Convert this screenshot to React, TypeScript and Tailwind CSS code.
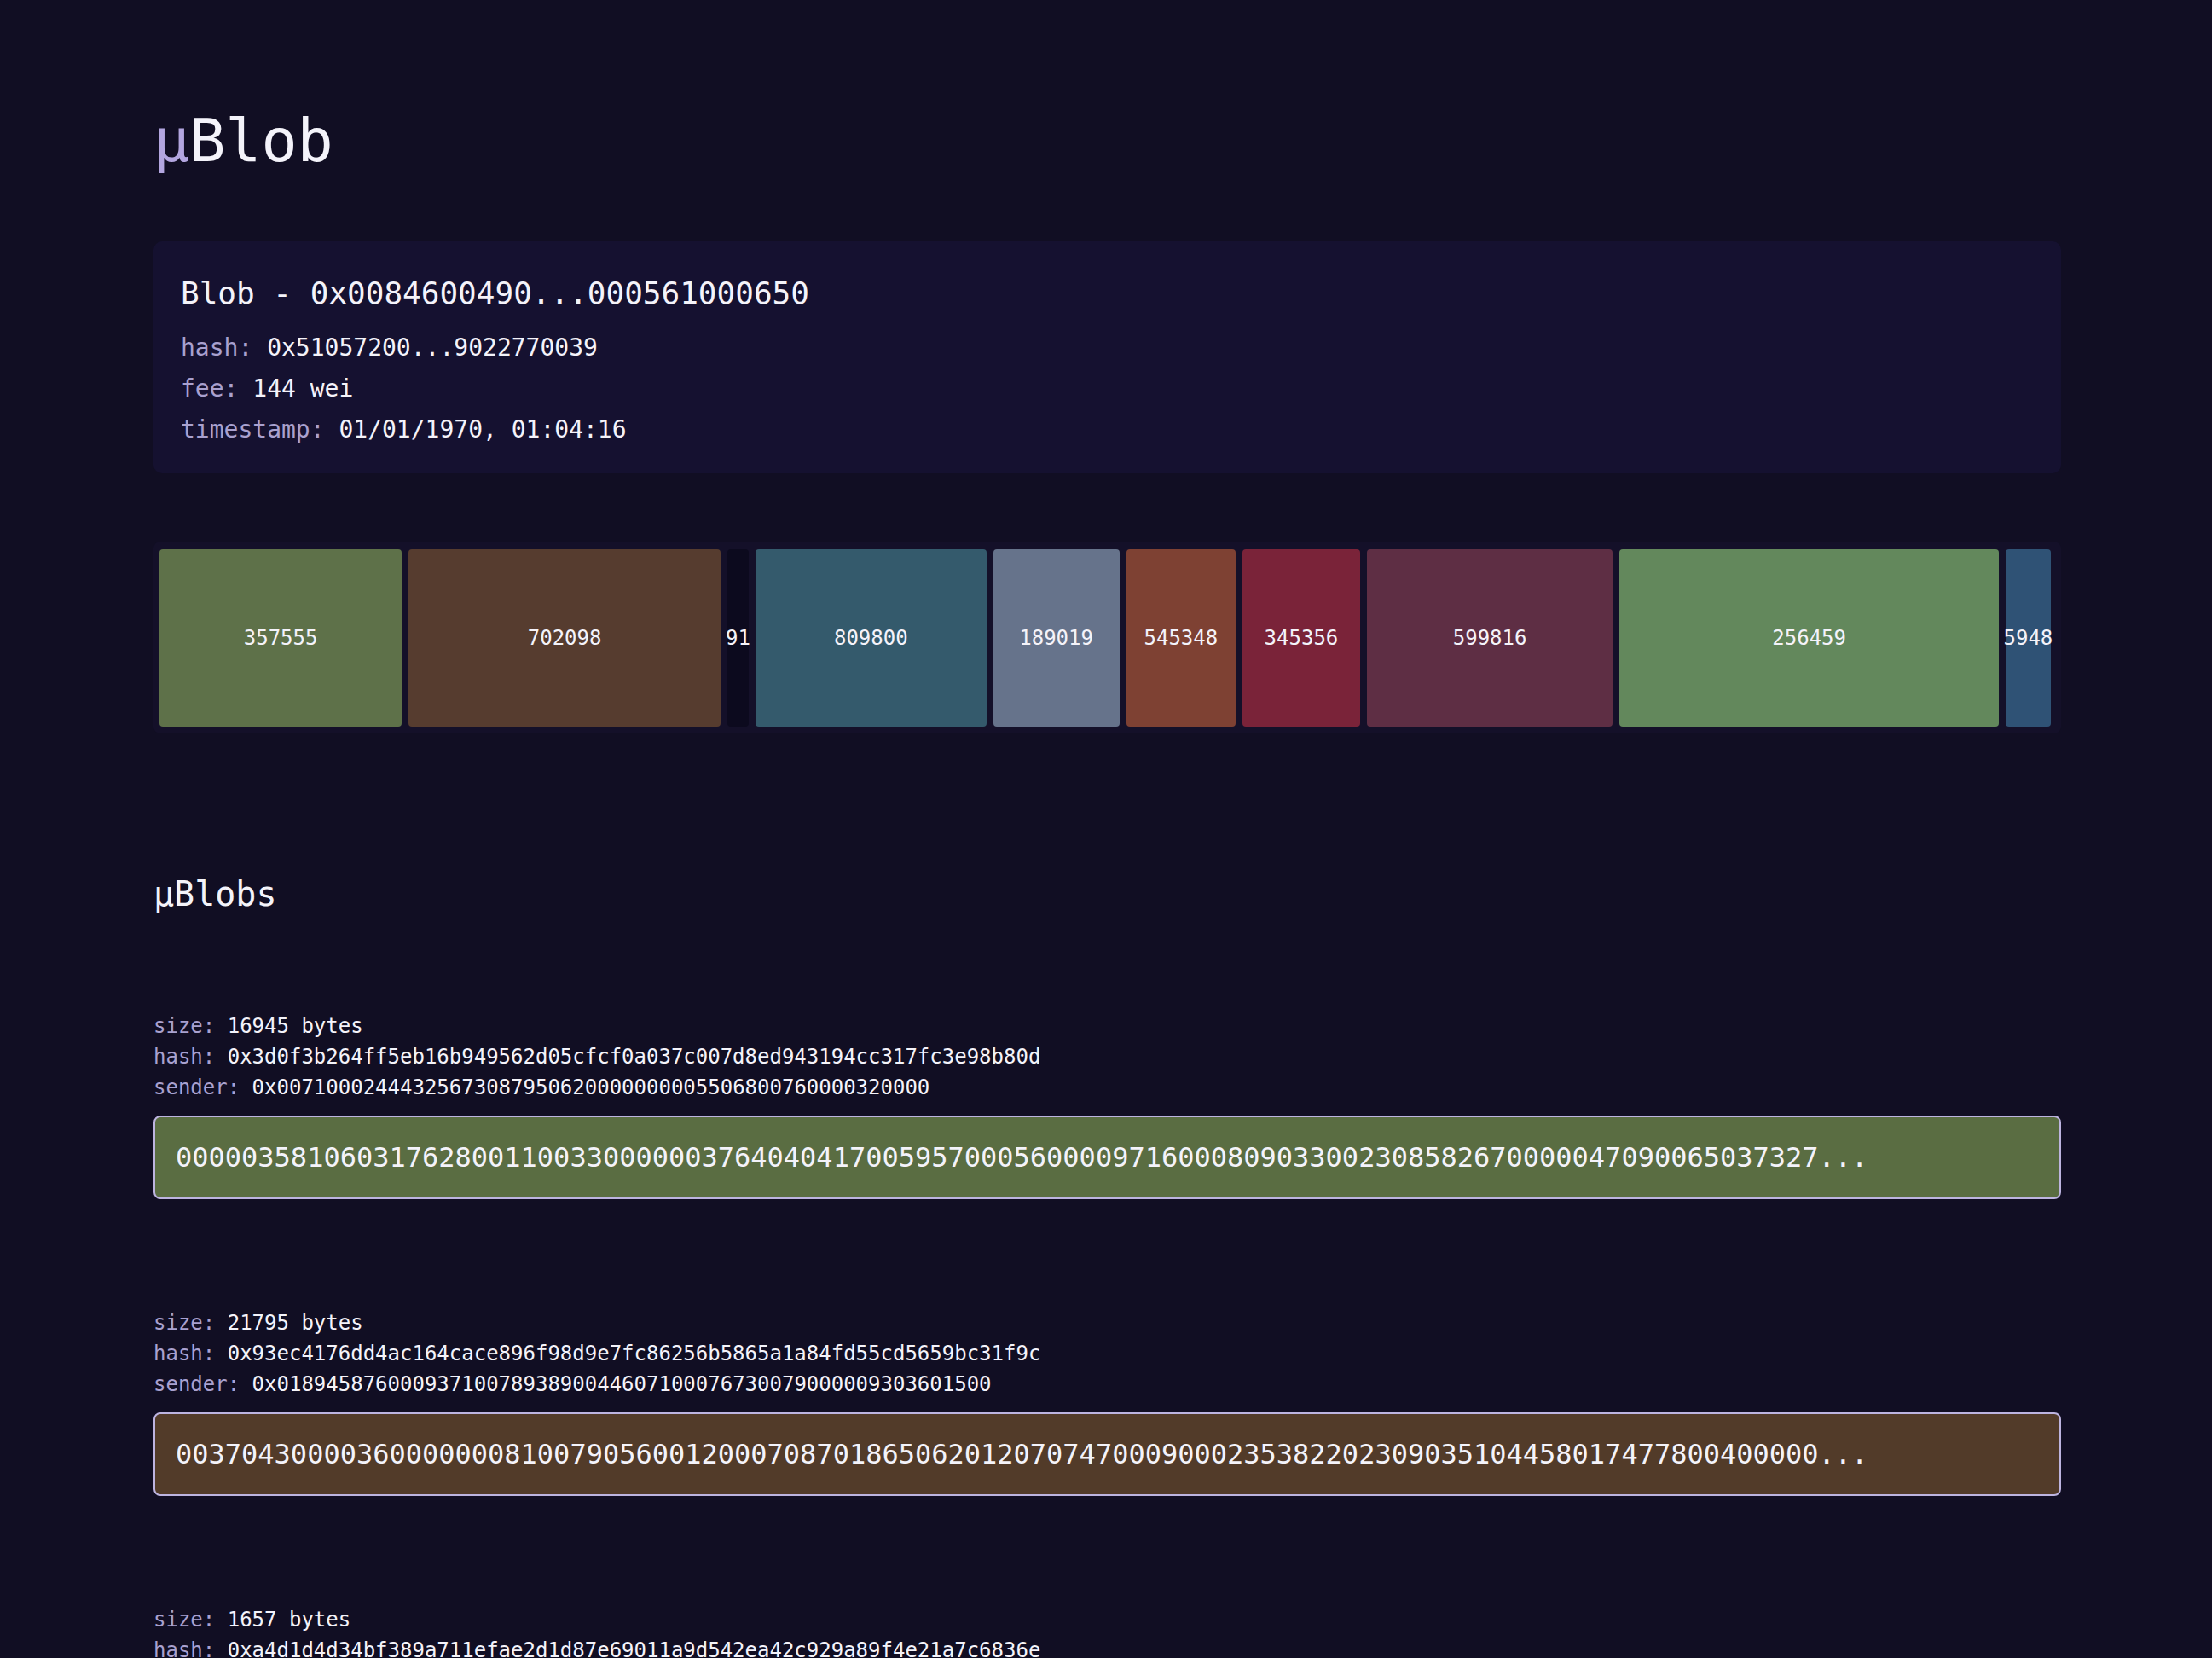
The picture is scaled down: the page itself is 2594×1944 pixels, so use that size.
import React from 'react';

const MONO = "font-['DejaVu_Sans_Mono','Liberation_Mono',monospace]";

type Segment = { label: string; weight: number; color: string };

const segments: Segment[] = [
  { label: '357555', weight: 283.6, color: '#5e7149' },
  { label: '702098', weight: 365, color: '#563c2f' },
  { label: '91', weight: 25, color: '#0c0a1e' },
  { label: '809800', weight: 270, color: '#345a6c' },
  { label: '189019', weight: 147.7, color: '#66738b' },
  { label: '545348', weight: 128.2, color: '#7e4133' },
  { label: '345356', weight: 137.4, color: '#7a2339' },
  { label: '599816', weight: 288, color: '#5e2e44' },
  { label: '256459', weight: 443.5, color: '#63885c' },
  { label: '5948', weight: 53, color: '#2f5275' },
];

type MicroBlob = {
  size: number;
  hash: string;
  sender: string;
  data: string;
  color: string;
};

const microBlobs: MicroBlob[] = [
  {
    size: 16945,
    hash: '0x3d0f3b264ff5eb16b949562d05cfcf0a037c007d8ed943194cc317fc3e98b80d',
    sender: '0x00710002444325673087950620000000005506800760000320000',
    data: '0000035810603176280011003300000037640404170059570005600009716000809033002308582670000047090065037327',
    color: '#5a6d42',
  },
  {
    size: 21795,
    hash: '0x93ec4176dd4ac164cace896f98d9e7fc86256b5865a1a84fd55cd5659bc31f9c',
    sender: '0x0189458760009371007893890044607100076730079000009303601500',
    data: '0037043000036000000081007905600120007087018650620120707470009000235382202309035104458017477800400000',
    color: '#523b29',
  },
  {
    size: 1657,
    hash: '0xa4d1d4d34bf389a711efae2d1d87e69011a9d542ea42c929a89f4e21a7c6836e',
    sender: '0x0630041000270090005400000081250033000000760408900210094000',
    data: '0000000047000990003300000085620051000000450007800000000320000900410000630048000072000000410031000980',
    color: '#345a6c',
  },
];

function Field({ label, value }: { label: string; value: string }) {
  return (
    <div className="whitespace-nowrap">
      <span className="text-[#a9a1cf]">{label}:</span> <span className="text-[#f4f3fa]">{value}</span>
    </div>
  );
}

function BlobCard() {
  return (
    <div className="mt-[83px] rounded-[10px] bg-[#151130] pl-8 pr-8 pt-[41px] pb-[27px]">
      <div className="text-[36px] leading-[40px] text-[#f4f3fa]">Blob - 0x0084600490...000561000650</div>
      <div className="mt-5 text-[28px] leading-[48px]">
        <Field label="hash" value="0x51057200...9022770039" />
        <Field label="fee" value="144 wei" />
        <Field label="timestamp" value="01/01/1970, 01:04:16" />
      </div>
    </div>
  );
}

function BlobBar() {
  return (
    <div className="mt-20 flex gap-2 rounded-lg bg-[#141029] pl-[7px] pr-[12px] pt-[9px] pb-[8px]">
      {segments.map((s, i) => (
        <div
          key={i}
          className="flex h-[208px] min-w-0 items-center justify-center whitespace-nowrap rounded-[4px] text-[24px] text-[#f4f3fa]"
          style={{ flex: `${s.weight} 1 0px`, backgroundColor: s.color }}
        >
          {s.label}
        </div>
      ))}
    </div>
  );
}

function MicroBlobEntry({ blob }: { blob: MicroBlob }) {
  return (
    <div>
      <div className="text-[24px] leading-[36px]">
        <Field label="size" value={`${blob.size} bytes`} />
        <Field label="hash" value={blob.hash} />
        <Field label="sender" value={blob.sender} />
      </div>
      <div
        className="mt-[15px] rounded-lg border-2 border-[#bdb4e0] px-6 py-[23px] text-[32px] leading-[48px] text-[#f4f3fa] whitespace-nowrap"
        style={{ backgroundColor: blob.color }}
      >
        {blob.data}...
      </div>
    </div>
  );
}

export default function App() {
  return (
    <div className={`min-h-screen bg-[#110e23] pl-[180px] pr-[177px] pt-[130px] pb-24 ${MONO}`}>
      <h1 className="text-[70px] leading-[70px] font-normal text-[#f4f3fa]">
        <span className="text-[#b3a6e0]">μ</span>Blob
      </h1>

      <BlobCard />

      <BlobBar />

      <h2 className="mt-[164px] text-[40px] leading-[48px] text-[#f4f3fa]">μBlobs</h2>

      <div className="mt-[113px] flex flex-col gap-[127px]">
        {microBlobs.map((b, i) => (
          <MicroBlobEntry key={i} blob={b} />
        ))}
      </div>
    </div>
  );
}
